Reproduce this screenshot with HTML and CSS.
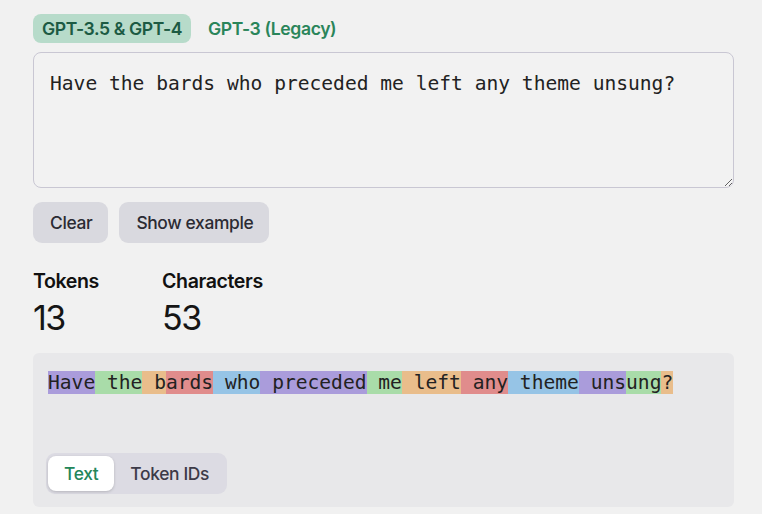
FILE: index.html
```html
<!DOCTYPE html>
<html>
<head>
<meta charset="utf-8">
<link rel="stylesheet" href="styles.css">
</head>
<body>
<main class="page">
  <nav class="tabs">
    <span class="tab tab-active">GPT-3.5 &amp; GPT-4</span>
    <span class="tab">GPT-3 (Legacy)</span>
  </nav>
  <textarea class="input" spellcheck="false">Have the bards who preceded me left any theme unsung?</textarea>
  <div class="actions">
    <button class="btn">Clear</button>
    <button class="btn">Show example</button>
  </div>
  <div class="stats">
    <div class="stat">
      <div class="stat-label">Tokens</div>
      <div class="stat-value">13</div>
    </div>
    <div class="stat">
      <div class="stat-label">Characters</div>
      <div class="stat-value">53</div>
    </div>
  </div>
  <section class="output">
    <div class="tokens"><span class="t purple">Have</span><span class="t green"> the</span><span class="t orange"> b</span><span class="t red">ards</span><span class="t blue"> who</span><span class="t purple"> preceded</span><span class="t green"> me</span><span class="t orange"> left</span><span class="t red"> any</span><span class="t blue"> theme</span><span class="t purple"> uns</span><span class="t green">ung</span><span class="t orange">?</span></div>
    <div class="toggle">
      <span class="seg seg-active">Text</span>
      <span class="seg">Token IDs</span>
    </div>
  </section>
</main>
</body>
</html>
```

FILE: styles.css
```css
* { box-sizing: border-box; }
html, body { margin: 0; padding: 0; }
body {
  background: #f1f1f1;
  font-family: Inter, "Noto Sans", sans-serif;
  color: #111;
  width: 762px;
  height: 514px;
  overflow: hidden;
}
.page {
  padding: 14px 28px 0 33px;
  display: flex;
  flex-direction: column;
}
.tabs {
  display: flex;
  align-items: center;
  gap: 4px;
  height: 29px;
}
.tab {
  font-size: 17.6px;
  font-weight: 600;
  letter-spacing: -0.4px;
  color: #2a855a;
  padding: 0 9px 0 13px;
  height: 29px;
  line-height: 29px;
  border-radius: 8px;
}
.tab-active {
  background: #b7dbca;
  color: #1c5a43;
  padding: 0 9px;
}
.input {
  margin-top: 9px;
  width: 701px;
  height: 136px;
  border: 1.5px solid #c9c7d3;
  border-radius: 8px;
  background: #f2f2f2;
  font-family: "DejaVu Sans Mono", monospace;
  font-size: 19.6px;
  line-height: 24px;
  color: #222;
  padding: 19px 16px 18px;
  resize: vertical;
  outline: none;
}
.actions {
  display: flex;
  gap: 11px;
  margin-top: 14px;
}
.btn {
  height: 41px;
  border: none;
  border-radius: 9px;
  background: #d9d9df;
  font-family: Inter, "Noto Sans", sans-serif;
  font-size: 17.4px;
  font-weight: 500;
  letter-spacing: -0.35px;
  color: #2b2b33;
  padding: 0 16px 0 17px;
}
.stats {
  display: flex;
  gap: 63px;
  margin-top: 25px;
}
.stat-label {
  font-size: 19.6px;
  font-weight: 600;
  letter-spacing: -0.4px;
  line-height: 26px;
}
.stat-value {
  font-size: 34px;
  font-weight: 400;
  letter-spacing: -1.5px;
  line-height: 48px;
  color: #151515;
}
.output {
  margin-top: 11px;
  width: 701px;
  height: 154px;
  background: #e8e8ea;
  border-radius: 6px;
  padding: 18px 13px 13px 15px;
  display: flex;
  flex-direction: column;
  justify-content: space-between;
  align-items: flex-start;
}
.tokens {
  font-family: "DejaVu Sans Mono", monospace;
  font-size: 19.6px;
  line-height: 23px;
  color: #222;
  white-space: pre;
}
.t { display: inline-block; height: 23px; }
.purple { background: #aa9cdb; }
.green { background: #a9dca9; }
.orange { background: #e9bd8b; }
.red { background: #e08c8c; }
.blue { background: #96c4e6; }
.toggle {
  display: flex;
  align-items: center;
  margin-left: -2px;
  background: #dcdbe3;
  border-radius: 9px;
  padding: 3px 2px;
  height: 41px;
}
.seg {
  font-size: 17.4px;
  font-weight: 500;
  letter-spacing: -0.35px;
  color: #3c3a48;
  padding: 0 16px;
  height: 35px;
  line-height: 35px;
  border-radius: 8px;
}
.seg-active {
  background: #ffffff;
  color: #23865a;
  box-shadow: 0 1px 3px rgba(0,0,0,0.18);
}
```
